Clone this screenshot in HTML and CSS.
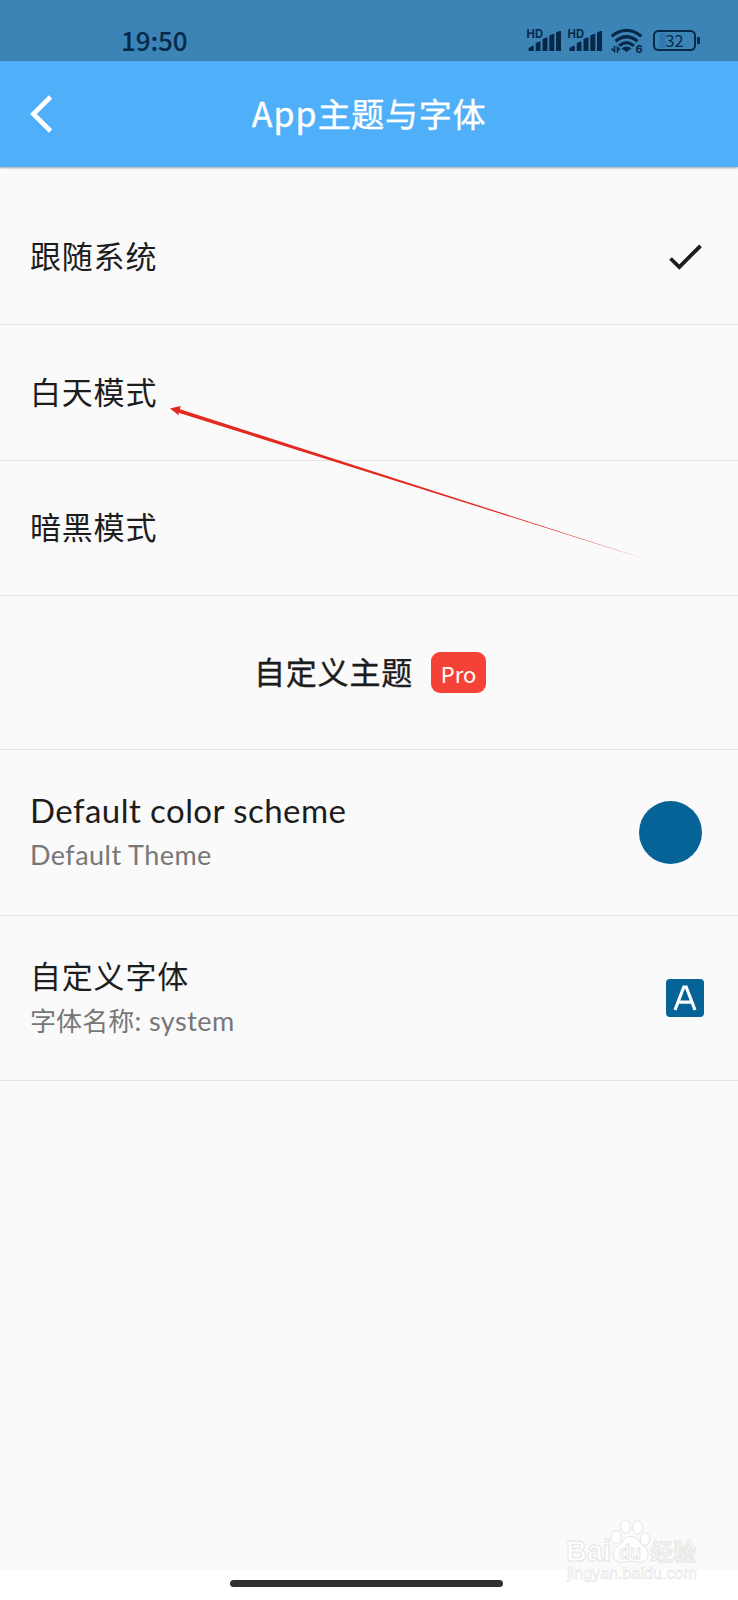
FILE: index.html
```html
<!DOCTYPE html>
<html lang="zh-CN">
<head>
<meta charset="utf-8">
<title>App主题与字体</title>
<link rel="stylesheet" href="styles.css">
</head>
<body>
<div class="screen">
  <div class="status">
    <span class="clock">19:50</span>
    <svg class="indicators" width="180" height="30" viewBox="522 26 180 30">
      <g fill="#06294a">
        <g id="signal">
          <text class="hd" x="526.5" y="37.8" textLength="16.5" lengthAdjust="spacingAndGlyphs">HD</text>
          <path d="M528.500 51v-3l4-2.200h1.300V51zM535.700 51v-8l3.500-1.500h1.300V51zM542.500 51V39l3.500-1.500h1.500V51zM549.300 51V35.500l3.500-1.500h1.500V51zM556 51V32.500l3.500-1.500h1.500V51z"/>
        </g>
        <use href="#signal" x="41"/>
        <path d="M621.5 48.500Q626.500 44.500 631.500 48.500L626.500 52z"/>
        <path d="M614.500 46v5.500l-3-2.800M617.500 53v-5.500l2.500 2.500" fill="none" stroke="#06294a" stroke-width="1.600"/>
        <text class="gen" x="635.500" y="53">6</text>
      </g>
      <g fill="none" stroke="#06294a" stroke-width="3.200">
        <path d="M611.700 36.200Q626.500 24.500 641.300 36.200"/>
        <path d="M615.500 41.200Q626.500 32.300 637.500 41.200"/>
        <path d="M619.200 45.800Q626.500 39.500 633.800 45.800"/>
      </g>
      <rect x="659" y="33" width="7" height="15" fill="#3478b0"/>
      <rect x="654" y="31" width="41" height="19" rx="4.500" fill="none" stroke="#06294a" stroke-width="2"/>
      <rect x="697" y="37" width="3" height="7" rx="1" fill="#06294a"/>
      <text class="charge" x="665.500" y="46.700" fill="#06294a" textLength="18" lengthAdjust="spacingAndGlyphs">32</text>
    </svg>
  </div>
  <header class="appbar">
    <svg class="back" width="24" height="38" viewBox="0 0 24 38"><path d="M20.500 2L3.300 19l17.200 17" fill="none" stroke="#fff" stroke-width="4.800"/></svg>
    <h1 class="title"><span class="title-latin">App</span>主题与字体</h1>
  </header>
  <main class="list">
    <div class="row first">
      <span class="label">跟随系统</span>
      <svg class="check" width="33" height="26" viewBox="0 0 33 26"><path d="M1.500 14.500l8.800 8.500L31.500 1.800" fill="none" stroke="#1c1c1c" stroke-width="3.800"/></svg>
    </div>
    <div class="row day"><span class="label">白天模式</span></div>
    <div class="row night"><span class="label">暗黑模式</span></div>
    <div class="row section"><span class="label strong">自定义主题</span><span class="pro">Pro</span></div>
    <div class="row double">
      <div class="texts">
        <span class="label latin">Default color scheme</span>
        <span class="sub sub-latin">Default Theme</span>
      </div>
      <span class="swatch"></span>
    </div>
    <div class="row double last">
      <div class="texts">
        <span class="label">自定义字体</span>
        <span class="sub">字体名称<span class="sub-value">: system</span></span>
      </div>
      <span class="font-icon"><svg width="24" height="26" viewBox="0 0 24 26"><path d="M2 25L10.800 2h2.400L22 25M5.500 17.200h13" fill="none" stroke="#fff" stroke-width="3.200"/></svg></span>
    </div>
  </main>
  <footer class="nav"><span class="handle"></span></footer>
  <svg class="arrow" width="480" height="156" viewBox="168 405 480 156"><path d="M170 408.500L180.500 406 180 409.200 648 560 178.500 412.700 179 415.500z" fill="#e32a20"/></svg>
  <svg class="watermark" width="138" height="68" viewBox="562 1518 138 68">
    <g fill="#fff" stroke="#e4e4e4" stroke-width="1">
      <text class="brand" x="566" y="1561" textLength="45" lengthAdjust="spacingAndGlyphs">Bai</text>
      <path d="M613 1554c0-7 8-8 10-13 3-6 13-6 16 0 2 5 9 6 9 13 0 8-7 9-12 8-4-1-8-1-12 0-5 1-11-1-11-8z"/>
      <ellipse cx="616" cy="1537" rx="5" ry="6.500"/><ellipse cx="625.500" cy="1526.500" rx="5" ry="6.500"/><ellipse cx="637.500" cy="1527.500" rx="5" ry="6.500"/><ellipse cx="645" cy="1539" rx="4.700" ry="6.500"/>
      <text class="du" x="619" y="1559" textLength="22" lengthAdjust="spacingAndGlyphs">du</text>
      <text class="jing" x="650" y="1560" textLength="46" lengthAdjust="spacingAndGlyphs">经验</text>
      <text class="url" x="567" y="1579" textLength="130" lengthAdjust="spacingAndGlyphs">jingyan.baidu.com</text>
    </g>
  </svg>
</div>
</body>
</html>
```

FILE: styles.css
```css
* { box-sizing: border-box; }
body { margin: 0; font-family: "Noto Sans CJK SC", sans-serif; }
.screen { position: relative; width: 738px; height: 1600px; background: #fafafa; display: flex; flex-direction: column; overflow: hidden; }
.status { height: 61px; background: #3c84b6; display: flex; justify-content: space-between; padding: 26px 36px 0 121px; }
.clock { font: 500 26px/28px "Noto Sans CJK SC", sans-serif; color: #06294a; letter-spacing: -.1px; }
.hd { font: 700 11.5px Inter, sans-serif; }
.gen { font: 700 11px Inter, sans-serif; }
.charge { font: 400 16px "Noto Sans CJK SC", sans-serif; }
.appbar { height: 106px; background: #4faff8; display: grid; grid-template-columns: 90px 1fr 90px; align-items: center; box-shadow: 0 1px 2px rgba(0, 0, 0, .35); flex: none; }
.back { margin-left: 30px; }
.title { margin: 0; padding-bottom: 3px; text-align: center; color: #fff; font-size: 33px; font-weight: 400; -webkit-text-stroke: .4px #fff; line-height: 48px; letter-spacing: .7px; white-space: nowrap; }
.title-latin { font-size: 34px; letter-spacing: 1px; }
.list { flex: 1; }
.row { display: flex; align-items: center; justify-content: space-between; padding: 0 36px 0 30px; border-bottom: 1px solid #e3e3e3; height: 135px; }
.first { height: 158px; padding-top: 22px; }
.day { height: 136px; }
.label { margin-top: -3px; padding-bottom: 1px; font-size: 31px; line-height: 44px; letter-spacing: .8px; color: #1d1d1d; white-space: nowrap; }
.section { height: 154px; justify-content: center; gap: 18px; padding: 0 0 0 2px; }
.strong { -webkit-text-stroke: .4px #1d1d1d; }
.pro { width: 55px; height: 41px; border-radius: 9px; background: #f44336; color: #fff; font: 400 22px/42px "Noto Sans CJK SC", sans-serif; text-align: center; }
.double { height: 166px; }
.last { height: 165px; }
.texts { display: flex; flex-direction: column; }
.texts .label { margin-top: -2px; padding-bottom: 2px; }
.latin { font-family: Lato, sans-serif; font-size: 33px; letter-spacing: .45px; }
.sub { font-size: 26px; line-height: 42px; color: #777; letter-spacing: .1px; white-space: nowrap; }
.sub-latin { font-family: Lato, sans-serif; font-size: 27px; letter-spacing: .45px; }
.sub-value { font-family: Lato, sans-serif; font-size: 27px; letter-spacing: .45px; }
.swatch { width: 63px; height: 63px; border-radius: 50%; background: #056398; }
.font-icon { width: 38px; height: 38px; border-radius: 4px; background: #056398; display: flex; align-items: center; justify-content: center; margin-right: -2px; }
.nav { height: 30px; background: #fff; display: flex; justify-content: center; padding: 10px 5px 0 0; }
.handle { width: 273px; height: 7px; border-radius: 4px; background: #303030; }
.arrow { position: absolute; left: 168px; top: 405px; }
.watermark { position: absolute; left: 562px; top: 1518px; }
.brand { font: 700 30px "Liberation Sans", sans-serif; }
.du { font: 700 20px "Liberation Sans", sans-serif; }
.jing { font: 500 23px "Noto Sans CJK SC", sans-serif; }
.url { font: 400 16px "Liberation Sans", sans-serif; stroke-width: .6px; }
```
